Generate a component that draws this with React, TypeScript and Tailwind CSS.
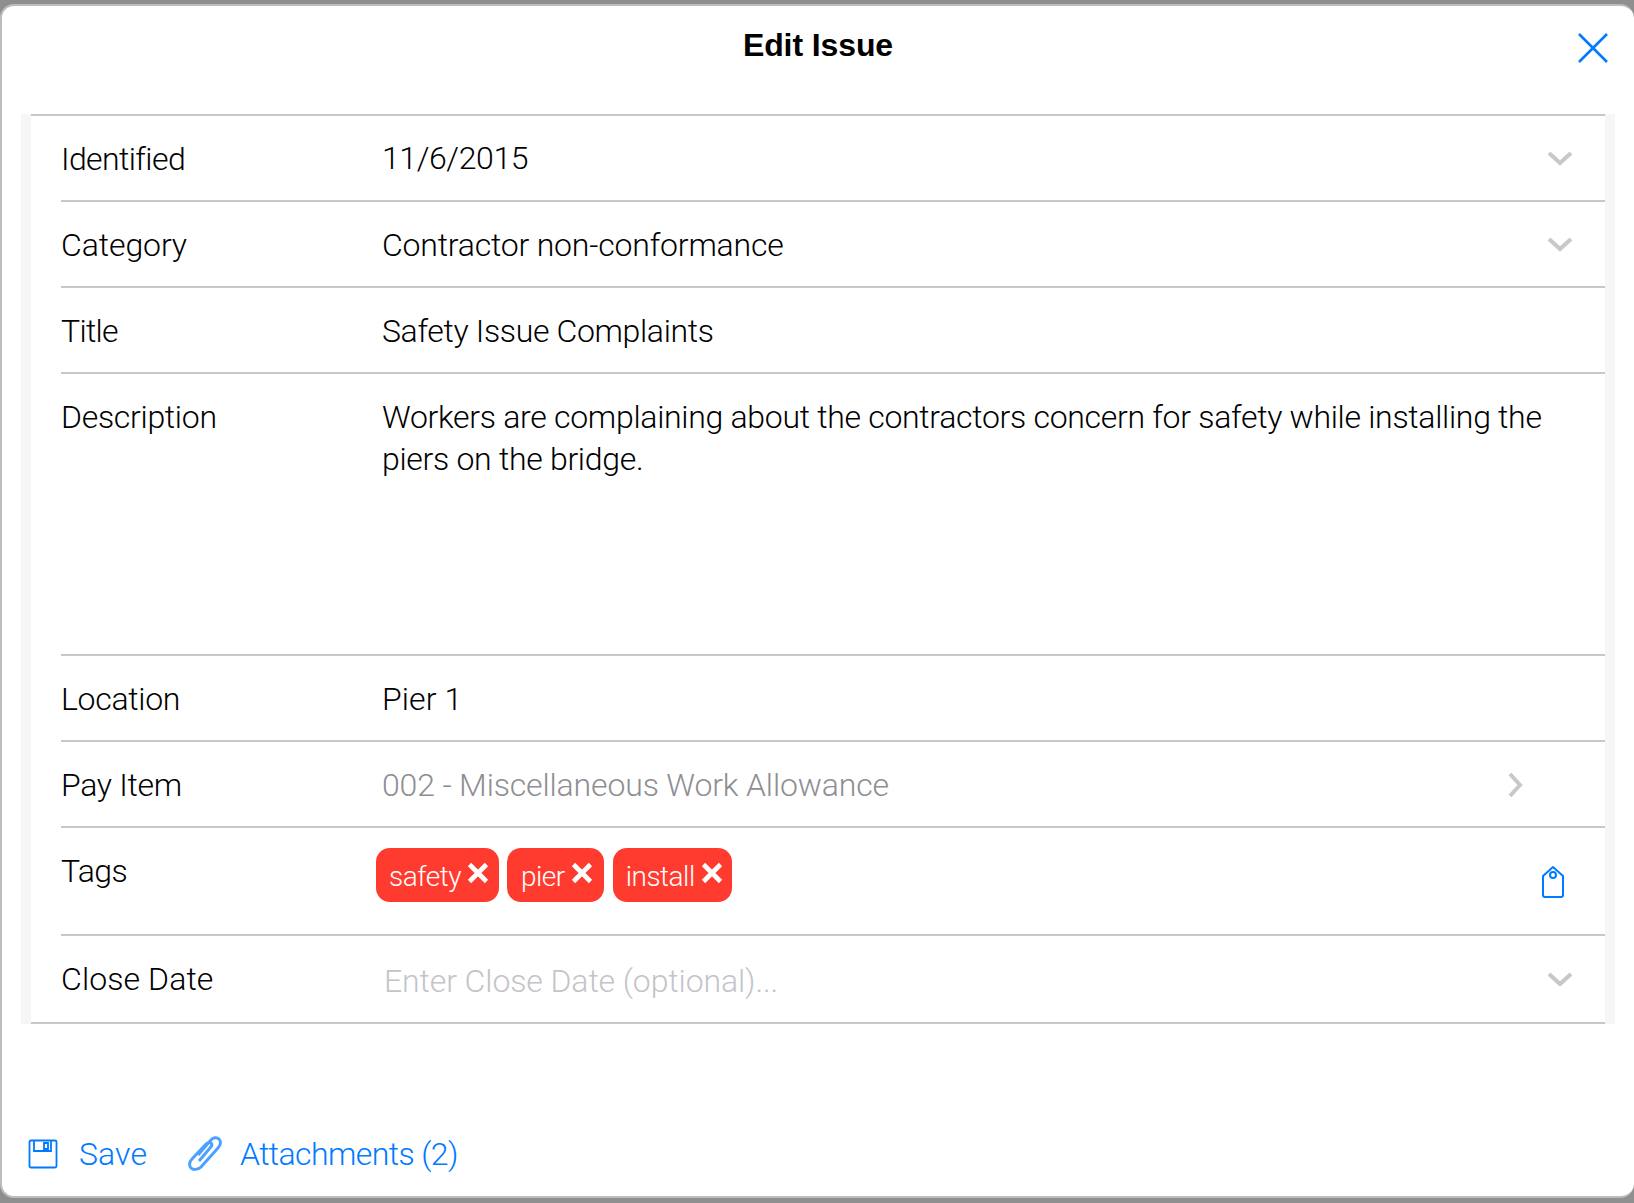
import React from "react";

const Chevron = () => (
  <svg width="26" height="16" viewBox="0 0 26 16" fill="none" className="blur-[0.5px]">
    <path d="M2 3l11 10L24 3" stroke="#c8c8c8" strokeWidth="4" />
  </svg>
);

const ChevronSlot = () => (
  <div className="mr-[32px] mb-[3px]"><Chevron /></div>
);

function Row({ label, labelClass = "", children, right, h = "h-[86px]", top = "items-center pt-[2px]", last = false }: { label: string; labelClass?: string; children?: React.ReactNode; right?: React.ReactNode; h?: string; top?: string; last?: boolean }) {
  return (
    <div className={`flex ${h} ${top} ${last ? "" : "border-b-2 border-[#c8c8c8]"} ml-[30px]`}>
      <div className={`w-[321px] shrink-0 text-black ${labelClass}`}>{label}</div>
      <div className="flex-1 min-w-0">{children}</div>
      {right}
    </div>
  );
}

const Tag = ({ t, c = "pl-[13px] pr-[10px]" }: { t: string; c?: string }) => (
  <div className={`flex items-center h-[54px] rounded-[14px] bg-[#ff3b30] text-white text-[28px] tracking-[-0.5px] ${c}`}>
    <span className="pt-[4px]">{t}</span>
    <svg width="22" height="22" viewBox="0 0 22 22" className="ml-[6px] mb-[4px]">
      <path d="M2.5 2.5l17 17M19.5 2.5l-17 17" stroke="#fff" strokeWidth="4.6" />
    </svg>
  </div>
);

export default function App() {
  return (
    <div className="w-[1634px] h-[1203px] overflow-hidden bg-[#8f8f8f] pt-[4px] pb-[5px] font-['Roboto',sans-serif] font-light text-[32px] tracking-[0.1px]">
      <div className="h-full flex flex-col bg-white rounded-[14px] border-t-2 border-b-2 border-l-2 border-[#bdbdbd]">
        <div className="h-[108px] shrink-0 flex relative">
          <div className="w-full text-center font-['Liberation_Sans',sans-serif] font-bold text-[32px] text-black pt-[15px] tracking-[-0.1px]">Edit Issue</div>
          <svg width="32" height="32" viewBox="0 0 32 32" className="absolute right-[25px] top-[26px]">
            <path d="M2 2l28 28M30 2L2 30" stroke="#007aff" strokeWidth="2.6" />
          </svg>
        </div>
        <div className="mx-[19px] w-[1594px] border-x-[10px] border-[#f6f6f6] h-[910px] shrink-0">
          <div className="border-t-2 border-b-2 border-[#c8c8c8] h-full">
            <Row label="Identified" labelClass="tracking-[-0.6px]" right={<ChevronSlot />}>
              <span className="tracking-[-0.4px] relative -top-[1px]">11/6/2015</span>
            </Row>
            <Row label="Category" labelClass="tracking-[-0.1px]" right={<ChevronSlot />}>
              <span className="tracking-[-0.2px]">Contractor non-conformance</span>
            </Row>
            <Row label="Title" labelClass="tracking-[-0.7px]">
              <span className="tracking-[-0.35px]">Safety Issue Complaints</span>
            </Row>
            <Row label="Description" labelClass="tracking-[-0.3px] pt-[19px]" h="h-[282px]" top="items-start">
              <div className="pt-[22px] leading-[42px] pr-[40px] tracking-[-0.3px]">
                Workers are complaining about the contractors concern for safety while installing the piers on the bridge.
              </div>
            </Row>
            <Row label="Location" labelClass="tracking-[-0.3px]">Pier 1</Row>
            <Row label="Pay Item" labelClass="tracking-[-0.3px]" right={<div className="mr-[82px]"><svg width="16" height="26" viewBox="0 0 16 26" fill="none" className="blur-[0.5px]"><path d="M3 2l10 11L3 24" stroke="#c8c8c8" strokeWidth="4" /></svg></div>}>
              <span className="text-[#8e8e93] tracking-[-0.15px]">002 - Miscellaneous Work Allowance</span>
            </Row>
            <Row label="Tags" labelClass="tracking-[-0.6px] pt-[19px]" h="h-[108px]" top="items-start" right={
              <svg width="24" height="34" viewBox="0 0 24 34" fill="none" className="mr-[40px] mt-[37px]">
                <path d="M2 11L12 2l10 9v19a2 2 0 0 1-2 2H4a2 2 0 0 1-2-2z" stroke="#007aff" strokeWidth="2" strokeLinejoin="round" />
                <circle cx="12" cy="10" r="3" stroke="#007aff" strokeWidth="2" />
              </svg>
            }>
              <div className="flex gap-[8px] -ml-[6px] pt-[20px]">
                <Tag t="safety" />
                <Tag t="pier" c="pl-[14px] pr-[11px]" />
                <Tag t="install" c="pl-[13px] pr-[9px] ml-[1px]" />
              </div>
            </Row>
            <Row label="Close Date" labelClass="relative -top-[2px]" h="h-[87px]" last right={<ChevronSlot />}>
              <span className="text-[#c4c4c8] ml-[2px] tracking-[-0.1px]">Enter Close Date (optional)...</span>
            </Row>
          </div>
        </div>
        <div className="flex-1 flex items-end pb-[17px] pl-[26px] text-[#007aff]">
          <div className="flex items-center h-[50px]">
            <svg width="30" height="30" viewBox="0 0 30 30" fill="none" className="-mt-[1px]">
              <path d="M1.5 3a1.5 1.5 0 0 1 1.5-1.5h24a1.5 1.5 0 0 1 1.5 1.5v24a1.5 1.5 0 0 1-1.5 1.5H3A1.5 1.5 0 0 1 1.5 27z" stroke="#007aff" strokeWidth="1.8" />
              <path d="M6 1.5V12h17V1.5M16 4h4v6h-4z" stroke="#007aff" strokeWidth="1.8" />
            </svg>
            <span className="ml-[21px]">Save</span>
            <svg width="36" height="38" viewBox="0 0 36 38" fill="none" className="ml-[39px] -mt-[2px] opacity-70 blur-[0.4px]">
              <path d="M12 21L24 7c3-4 7-4 9-2s2 6-1 9L15 33c-3 3-8 3-10 1s-2-6 1-9L20 10c2-2 4-2 5-1s1 3-1 5L13 27" stroke="#007aff" strokeWidth="3" />
            </svg>
            <span className="ml-[18px] tracking-[-0.6px]">Attachments (2)</span>
          </div>
        </div>
      </div>
    </div>
  );
}
